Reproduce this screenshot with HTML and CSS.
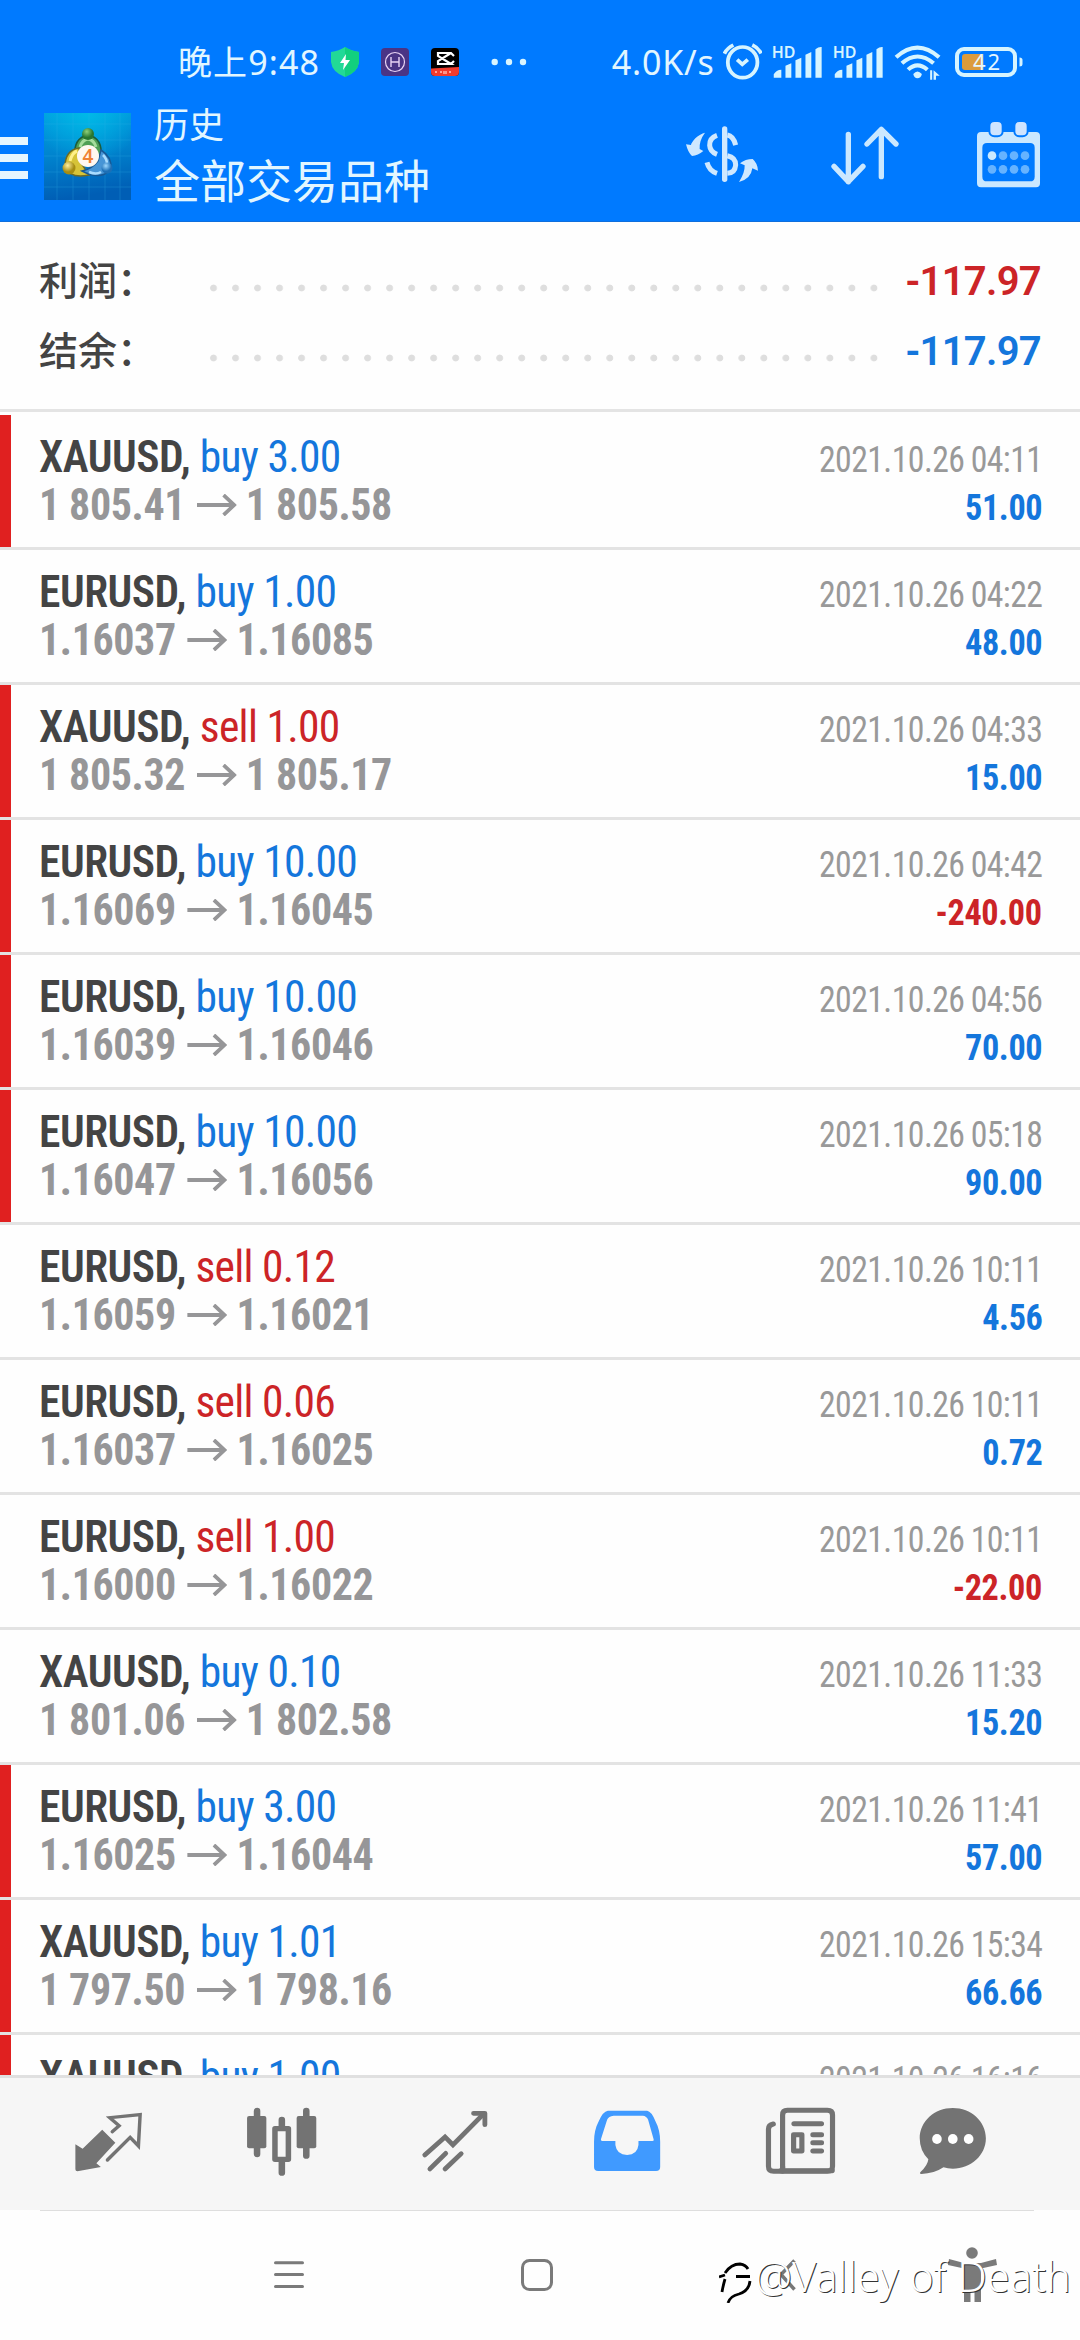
FILE: index.html
```html
<!DOCTYPE html>
<html lang="zh-CN">
<head>
<meta charset="utf-8">
<title>历史</title>
<link rel="stylesheet" href="styles.css">
</head>
<body>
<svg class="defs" width="0" height="0">
  <symbol id="arrow" viewBox="0 0 41 22"><path d="M0 11H39M27.500 1L38.500 11L27.500 21" fill="none" stroke="#969698" stroke-width="3.800"/></symbol>
  <symbol id="signal" viewBox="668 130 150 110" preserveAspectRatio="none">
    <path d="M676 234V224Q683 210 698 210V234ZM710 234V198L727 191V234ZM739 234V182L756 174V234ZM768 234V165L785 157V234ZM797 234V149Q806 141 815 142V234Z" fill="#d6f4ff"/>
    <text x="670" y="174" font-size="47" textLength="69" lengthAdjust="spacingAndGlyphs" font-weight="600" fill="#d6f4ff">HD</text>
  </symbol>
</svg>
<header class="top">
  <div class="status">
    <div class="status-left">
      <span class="clock">晚上9:48</span>
      <svg class="shield" viewBox="0 0 28 30"><path d="M14 0Q20 4 28 5V15Q27 25 14 30Q1 25 0 15V5Q8 4 14 0Z" fill="#22d997"/><path d="M14 0Q20 4 28 5V15Q27 25 14 30Z" fill="#12cf7e"/><path d="M15 7L9 16H13L12 23L19 13H14.500Z" fill="#fff"/></svg>
      <svg class="app" viewBox="0 0 28 28"><rect width="28" height="28" rx="4" fill="#4a3485"/><circle cx="14" cy="14" r="9.500" fill="none" stroke="#e9d4f5" stroke-width="1.200"/><path d="M10 9V19M18 9V19M10 14H18" stroke="#e9d4f5" stroke-width="1.400"/></svg>
      <svg class="app" viewBox="0 0 28 28"><rect width="28" height="28" rx="4" fill="#000"/><path d="M0 20.500L28 19V24Q28 28 24 28H4Q0 28 0 24Z" fill="#f23b2d"/><path d="M23 8L20 5H7V8L20 16H7V13L20 5M20 16L23 13" fill="none" stroke="#fff" stroke-width="2.200"/><path d="M4 24H6M9 24H11M13 23V26M15 23V26M18 24H20" stroke="#ffc6bd" stroke-width="1.300"/></svg>
      <svg class="more" viewBox="0 0 36 8"><g fill="#d9f5ff"><circle cx="3.700" cy="4" r="3.200"/><circle cx="18" cy="4" r="3.200"/><circle cx="32" cy="4" r="3.200"/></g></svg>
    </div>
    <div class="status-right">
      <span class="speed">4.0K/s</span>
      <svg class="alarm" viewBox="525 130 115 110" preserveAspectRatio="none"><g fill="none" stroke="#d6f4ff" stroke-width="11"><ellipse cx="582" cy="188" rx="43" ry="46"/><path d="M529 162Q536 146 555 136M610 136Q627 144 636 161M566 180L581 194L597 180"/></g></svg>
      <svg class="signal"><use href="#signal"/></svg>
      <svg class="signal"><use href="#signal"/></svg>
      <svg class="wifi" viewBox="1026 130 136 112" preserveAspectRatio="none"><g fill="none" stroke="#d6f4ff" stroke-width="12"><path d="M1032 173Q1094 115 1157 173M1049 191Q1094 150 1141 191M1067 210Q1094 184 1123 210"/></g><path d="M1082 223Q1094 208 1107 223Q1104 236 1094 236Q1085 236 1082 223ZM1118 223L1131 240V212H1137V240H1131M1141 240V212L1159 228H1148V240Z" fill="#d6f4ff"/></svg>
      <svg class="battery" viewBox="0 0 69 32"><rect x="2" y="3" width="58" height="26" rx="7" fill="none" stroke="#d6f4ff" stroke-width="4"/><path d="M64.500 11.500Q67.500 11.500 67.500 14V18Q67.500 20.500 64.500 20.500Z" fill="#d6f4ff"/><path d="M10 8H28V24H10Q7 24 7 21V11Q7 8 10 8Z" fill="#dc9b3c"/><text x="18" y="24" font-size="22" textLength="27" fill="#e4f7ff">42</text></svg>
    </div>
  </div>
  <div class="appbar">
    <div class="burger"><i></i><i></i><i></i></div>
    <svg class="logo" viewBox="0 0 87 87">
      <defs>
        <linearGradient id="sky" x2=".15" y2="1"><stop stop-color="#009fdf"/><stop offset=".5" stop-color="#0083ce"/><stop offset="1" stop-color="#005eb5"/></linearGradient>
        <radialGradient id="shine" cx=".5" cy="0" r=".6"><stop stop-color="#00c0ea" stop-opacity=".8"/><stop offset="1" stop-color="#00c8ec" stop-opacity="0"/></radialGradient>
        <radialGradient id="green" cx=".4" cy=".3"><stop stop-color="#8fd07a"/><stop offset="1" stop-color="#28762f"/></radialGradient>
        <radialGradient id="gold" cx=".4" cy=".3"><stop stop-color="#fff0a0"/><stop offset="1" stop-color="#a58c12"/></radialGradient>
        <radialGradient id="blue" cx=".4" cy=".3"><stop stop-color="#9ed8ff"/><stop offset="1" stop-color="#1c6fb6"/></radialGradient>
      </defs>
      <rect width="87" height="87" fill="url(#sky)"/><rect width="87" height="87" fill="url(#shine)"/>
      <path d="M13 0V87M29 0V87M45 0V87M61 0V87M76 0V87M0 11H87M0 27H87M0 43H87M0 59H87M0 74H87" stroke="#38b5ea" stroke-width=".7" opacity=".35"/>
      <path d="M31 44Q29 25 44 22Q59 25 57 44L44 38Z" fill="#4f9f55" stroke="#1d5d3c" stroke-width="1.500"/>
      <path d="M36 34Q38 27 44 26Q50 27 52 34" fill="none" stroke="#a5dc9c" stroke-width="3"/>
      <path d="M35 35Q21 37 21 54Q26 66 45 62L37 50Z" fill="#d6c338" stroke="#6c6a25" stroke-width="1.500"/>
      <path d="M26 48Q28 40 33 38" fill="none" stroke="#fff08a" stroke-width="3"/>
      <path d="M57 37Q68 44 67 56Q57 68 38 58Q48 56 54 48Z" fill="#4795d6" stroke="#185995" stroke-width="1.500"/>
      <path d="M59 42Q63 46 63 51M45 59Q52 62 57 59" fill="none" stroke="#a9dcff" stroke-width="2.500"/>
      <circle cx="44" cy="21" r="6" fill="url(#green)"/><circle cx="25" cy="55" r="6.500" fill="url(#gold)"/><circle cx="63" cy="55" r="5.500" fill="url(#blue)"/>
      <circle cx="44" cy="43" r="11" fill="#fff8f0"/>
      <text x="44" y="50" text-anchor="middle" font-size="19" font-weight="600" fill="#f08235">4</text>
    </svg>
    <div class="titles"><h1>历史</h1><h2>全部交易品种</h2></div>
    <div class="actions">
      <svg class="act-money" viewBox="42 75 228 185"><g fill="none" stroke="#cfe8ff" stroke-width="15"><path d="M164 87V238" stroke-width="16" stroke-linecap="round"/><path d="M141 106Q118 114 119 136Q120 155 141 163M111 187Q117 212 141 220M172 105Q190 108 197 135M172 167Q197 172 197 195Q195 219 172 220"/></g><path d="M105 98Q91 101 76 115Q63 130 63 135L48 133Q54 158 66 168Q84 166 100 153L89 147Q87 122 105 98ZM207 246Q243 237 247 205L264 212Q263 190 248 177Q226 177 210 190L224 196Q225 218 207 246Z" fill="#cfe8ff"/></svg>
      <svg class="act-sort" viewBox="480 75 210 185"><path d="M535 103V245M492 199L535 245L579 199M634 230V88M591 132L634 88L678 132" fill="none" stroke="#cbe8ff" stroke-width="16" stroke-linecap="round" stroke-linejoin="round"/></svg>
      <svg class="act-cal" viewBox="915 60 200 207"><path fill-rule="evenodd" d="M933 96H1098Q1110 96 1110 108V250Q1110 262 1098 262H933Q921 262 921 250V108Q921 96 933 96ZM951 129Q937 129 937 143V230Q937 244 951 244H1080Q1094 244 1094 230V143Q1094 129 1080 129Z" fill="#cbe8ff"/><g fill="#cfe4ff" stroke="#007aff" stroke-width="6"><rect x="958" y="63" width="40" height="46" rx="15"/><rect x="1033" y="63" width="40" height="46" rx="15"/></g><circle cx="966" cy="167" r="13" fill="#cbeaff"/><g fill="#66b3ff"><circle cx="999" cy="167" r="13"/><circle cx="1032" cy="167" r="13"/><circle cx="1065" cy="167" r="13"/><circle cx="966" cy="208" r="13"/><circle cx="999" cy="208" r="13"/><circle cx="1032" cy="208" r="13"/><circle cx="1065" cy="208" r="13"/></g></svg>
    </div>
  </div>
</header>
<section class="summary">
  <div class="sum"><span class="label">利润：</span><span class="dots"></span><b class="neg">-117.97</b></div>
  <div class="sum"><span class="label">结余：</span><span class="dots"></span><b class="pos">-117.97</b></div>
</section>
<main class="deals">
  <article class="deal marked"><div class="line"><span class="sym">XAUUSD, <em class="pos">buy 3.00</em></span><time>2021.10.26 04:11</time></div><div class="line"><span class="price">1 805.41<svg><use href="#arrow"/></svg>1 805.58</span><b class="pos">51.00</b></div></article>
  <article class="deal"><div class="line"><span class="sym">EURUSD, <em class="pos">buy 1.00</em></span><time>2021.10.26 04:22</time></div><div class="line"><span class="price">1.16037<svg><use href="#arrow"/></svg>1.16085</span><b class="pos">48.00</b></div></article>
  <article class="deal marked"><div class="line"><span class="sym">XAUUSD, <em class="neg">sell 1.00</em></span><time>2021.10.26 04:33</time></div><div class="line"><span class="price">1 805.32<svg><use href="#arrow"/></svg>1 805.17</span><b class="pos">15.00</b></div></article>
  <article class="deal marked"><div class="line"><span class="sym">EURUSD, <em class="pos">buy 10.00</em></span><time>2021.10.26 04:42</time></div><div class="line"><span class="price">1.16069<svg><use href="#arrow"/></svg>1.16045</span><b class="neg">-240.00</b></div></article>
  <article class="deal marked"><div class="line"><span class="sym">EURUSD, <em class="pos">buy 10.00</em></span><time>2021.10.26 04:56</time></div><div class="line"><span class="price">1.16039<svg><use href="#arrow"/></svg>1.16046</span><b class="pos">70.00</b></div></article>
  <article class="deal marked"><div class="line"><span class="sym">EURUSD, <em class="pos">buy 10.00</em></span><time>2021.10.26 05:18</time></div><div class="line"><span class="price">1.16047<svg><use href="#arrow"/></svg>1.16056</span><b class="pos">90.00</b></div></article>
  <article class="deal"><div class="line"><span class="sym">EURUSD, <em class="neg">sell 0.12</em></span><time>2021.10.26 10:11</time></div><div class="line"><span class="price">1.16059<svg><use href="#arrow"/></svg>1.16021</span><b class="pos">4.56</b></div></article>
  <article class="deal"><div class="line"><span class="sym">EURUSD, <em class="neg">sell 0.06</em></span><time>2021.10.26 10:11</time></div><div class="line"><span class="price">1.16037<svg><use href="#arrow"/></svg>1.16025</span><b class="pos">0.72</b></div></article>
  <article class="deal"><div class="line"><span class="sym">EURUSD, <em class="neg">sell 1.00</em></span><time>2021.10.26 10:11</time></div><div class="line"><span class="price">1.16000<svg><use href="#arrow"/></svg>1.16022</span><b class="neg">-22.00</b></div></article>
  <article class="deal"><div class="line"><span class="sym">XAUUSD, <em class="pos">buy 0.10</em></span><time>2021.10.26 11:33</time></div><div class="line"><span class="price">1 801.06<svg><use href="#arrow"/></svg>1 802.58</span><b class="pos">15.20</b></div></article>
  <article class="deal marked"><div class="line"><span class="sym">EURUSD, <em class="pos">buy 3.00</em></span><time>2021.10.26 11:41</time></div><div class="line"><span class="price">1.16025<svg><use href="#arrow"/></svg>1.16044</span><b class="pos">57.00</b></div></article>
  <article class="deal marked"><div class="line"><span class="sym">XAUUSD, <em class="pos">buy 1.01</em></span><time>2021.10.26 15:34</time></div><div class="line"><span class="price">1 797.50<svg><use href="#arrow"/></svg>1 798.16</span><b class="pos">66.66</b></div></article>
  <article class="deal marked"><div class="line"><span class="sym">XAUUSD, <em class="pos">buy 1.00</em></span><time>2021.10.26 16:16</time></div></article>
</main>
<nav class="tabs">
  <svg width="68.900" viewBox="215 255 200 220" preserveAspectRatio="none"><path d="M297 329L335 368L280 430L293 441L225 454Q219 454 219 448V373L240 386Z" fill="#737373"/><path d="M326 335L346 317L319 293L407 284L402 378L378 352L312 420" fill="none" stroke="#737373" stroke-width="10" stroke-linecap="round"/></svg>
  <svg width="73" viewBox="710 255 212 220" preserveAspectRatio="none"><g stroke="#737373" stroke-width="19" stroke-linecap="round"><path d="M745 273V402M888 273V407M817 300V325M817 425V458"/></g><rect x="716" y="288" width="56" height="97" rx="6" fill="#737373"/><rect x="860" y="288" width="57" height="97" rx="6" fill="#737373"/><rect x="797" y="326" width="39" height="92" fill="#f6f6f6" stroke="#737373" stroke-width="16" stroke-linejoin="round"/></svg>
  <svg width="68" viewBox="1220 255 198 220" preserveAspectRatio="none"><g fill="none" stroke="#737373" stroke-width="14" stroke-linecap="round"><path d="M1231 405L1290 351L1313 375L1403 281"/><path d="M1373 280H1406V314" stroke-linejoin="round"/><path d="M1292 400L1246 447M1337 401L1290 447"/></g></svg>
  <svg width="68.900" viewBox="155 255 200 220" preserveAspectRatio="none"><path fill-rule="evenodd" d="M198 272H312Q325 274 336 303Q350 330 350 365V441Q350 453 338 453H170Q158 453 158 441V365Q158 330 172 303Q184 274 198 272ZM215 287Q200 289 196 299L178 358Q177 363 182 363H220V375Q224 405 254 405Q284 404 287 375V363H328Q333 363 331 358L315 299Q310 288 300 287Z" fill="#409aff"/></svg>
  <svg width="73" viewBox="652 255 212 220" preserveAspectRatio="none"><g fill="none" stroke="#737373" stroke-linecap="round"><path d="M706 444V285Q706 271 720 271H836Q851 271 851 285V439Q851 454 836 454H680Q665 454 665 439V327Q665 315 679 312" stroke-width="15"/><path d="M706 440V454M700 452H850" stroke-width="15"/><path d="M739 311H819M794 344H819M794 368H819M794 393H819" stroke-width="15"/><rect x="738" y="344" width="24" height="49" stroke-width="15" stroke-linejoin="round"/></g></svg>
  <svg width="69.600" viewBox="1098 255 202 220" preserveAspectRatio="none"><path d="M1199 264C1252 264 1295 304 1295 355C1295 406 1252 446 1199 446Q1184 446 1172 442Q1145 461 1108 462Q1100 461 1106 455Q1126 437 1128 418Q1103 392 1103 355C1103 304 1146 264 1199 264Z" fill="#737373"/><g fill="#fff"><ellipse cx="1153" cy="357" rx="14" ry="15"/><ellipse cx="1199" cy="357" rx="14" ry="15"/><ellipse cx="1245" cy="357" rx="14" ry="15"/></g></svg>
</nav>
<footer class="sysnav">
  <svg class="nav-menu" viewBox="0 0 30 32"><path d="M1.500 4.700H28.500M1.500 16.500H28.500M1.500 28.500H28.500" stroke="#7a7a7a" stroke-width="3" stroke-linecap="round"/></svg>
  <svg class="nav-home" viewBox="0 0 32 32"><rect x="1.500" y="1.500" width="29" height="29" rx="7" fill="none" stroke="#7a7a7a" stroke-width="3"/></svg>
  <svg class="nav-back" viewBox="0 0 19 32"><path d="M16.500 1.500L3 15.500L16.500 30.500" fill="none" stroke="#777" stroke-width="3.500"/></svg>
  <svg class="nav-person" viewBox="0 0 49 56"><circle cx="24" cy="6" r="5.800" fill="#7a7a7a"/><path d="M1 12L16 16H33L48 12L49 18L33 21.500V55H26.500V43H22.500V55H16V21.500L0 18Z" fill="#7a7a7a"/></svg>
  <div class="watermark">
    <svg viewBox="0 0 34 42"><path d="M0 16L6 14M17 15.500H31M3 31Q4 25 6 18M6 12Q12 3 21 3Q27 4 29 8M31 20Q30 30 20 33Q11 35 9 42" fill="none" stroke="#000" stroke-width="2.800"/></svg>
    <span>@Valley of Death</span>
  </div>
</footer>
</body>
</html>
```
FILE: styles.css
```css
* { box-sizing: border-box; margin: 0; }
body { width: 1080px; height: 2340px; overflow: hidden; background: #fefefe; display: flex; flex-direction: column; font-family: "Noto Sans", "Noto Sans CJK SC", sans-serif; }
svg { display: block; flex: none; }
.defs { position: absolute; }
.pos { color: #1476dc; }
.neg { color: #cc2427; }

.top { height: 222px; background: #007aff; border-bottom: 1px solid #0f6fdd; color: #e2f6ff; flex: none; }
.status { height: 100px; padding: 0 56px 0 178px; display: flex; justify-content: space-between; }
.status-left, .status-right { display: flex; align-items: flex-start; }
.clock, .speed { font-size: 34px; line-height: 46px; margin-top: 39px; white-space: nowrap; }
.clock { width: 153px; letter-spacing: 1.100px; }
.shield { width: 28px; height: 30px; margin-top: 47px; }
.app { width: 28px; height: 28px; margin: 48px 0 0 22px; }
.more { width: 36px; height: 8px; margin: 58px 0 0 32px; }
.speed { width: 111px; letter-spacing: .800px; }
.alarm { width: 39.600px; height: 36.700px; margin-top: 43px; }
.signal { width: 51.700px; height: 36.700px; margin: 43px 0 0 8.700px; }
.wifi { width: 46.800px; height: 37.300px; margin: 43px 0 0 11px; }
.battery { width: 69px; height: 32px; margin: 46px 0 0 14px; }

.appbar { display: flex; height: 121px; }
.burger { width: 27.500px; margin: 37px 16.500px 0 0; display: flex; flex-direction: column; gap: 9.500px; }
.burger i { height: 7.500px; background: #e6f6ff; }
.logo { width: 87px; height: 87px; margin-top: 13px; }
.titles { width: 553px; padding-left: 23px; margin-top: -2px; font-family: "Noto Sans CJK SC", sans-serif; }
.titles h1 { font-size: 35px; line-height: 50px; font-weight: 400; }
.titles h2 { font-size: 46px; line-height: 60px; font-weight: 400; }
.actions { display: flex; align-items: flex-start; }
.act-money { width: 76px; height: 61.700px; margin-top: 25px; }
.act-sort { width: 70px; height: 61.700px; margin: 25px 0 0 70px; }
.act-cal { width: 66.700px; height: 69px; margin: 20px 0 0 75px; }

.summary { height: 190px; padding: 24px 39px 0 39px; border-bottom: 3px solid #e4e4e4; flex: none; }
.sum { display: flex; height: 70px; align-items: center; }
.label { width: 170px; margin-top: -6px; font: 500 39px/70px "Noto Sans CJK SC", sans-serif; color: #444; }
.dots { width: 682px; height: 8px; margin-top: 14px; background: radial-gradient(circle at 4.500px 4px, #dedede 3px, transparent 3.800px) 0 0 / 22.020px 8px; }
.sum b { margin: 2px 0 0 auto; font: 600 40px/70px Roboto, sans-serif; letter-spacing: -.7px; }

.deals { height: 1663px; padding-top: 3px; overflow: hidden; flex: none; }
.deal { height: 135px; padding: 19px 38px 0 39px; border-bottom: 3px solid #e3e3e3; }
.marked { background: linear-gradient(#e02020, #e02020) 0 0 / 11px 100% no-repeat padding-box; }
.line { display: flex; justify-content: space-between; align-items: baseline; height: 48px; line-height: 48px; white-space: nowrap; font-family: "Roboto Condensed", sans-serif; }
.sym { font-size: 43.500px; font-weight: 600; color: #444; letter-spacing: -.5px; }
.sym em { font-style: normal; font-weight: 400; letter-spacing: -.7px; }
.price { font-size: 43.500px; font-weight: 700; color: #969698; display: flex; letter-spacing: -.4px; transform: scaleX(.965); transform-origin: left; }
.price svg { width: 42.500px; height: 22px; margin: 12px 9px 0 11.500px; }
.line time { font-size: 36px; color: #999; letter-spacing: -.6px; word-spacing: -1px; transform: scaleX(.937); transform-origin: right; }
.line b { font-size: 36px; font-weight: 700; letter-spacing: -.4px; transform: scaleX(.95); transform-origin: right; }

.tabs { height: 135px; flex: none; padding: 27px 0 0 22px; border-top: 3px solid #e0e0e0; background: #f6f6f6; display: grid; grid-template-columns: repeat(5, 173px) 132px; justify-items: center; }
.tabs svg { height: 73.300px; }

.sysnav { position: relative; flex: 1; display: flex; align-items: flex-start; padding-left: 274px; }
.sysnav::before { content: ""; position: absolute; top: 0; left: 40px; right: 46px; height: 1px; background: #dedede; }
.nav-menu { width: 30px; height: 32px; margin-top: 48px; }
.nav-home { width: 32px; height: 32px; margin: 49px 0 0 217px; }
.nav-back { width: 19px; height: 32px; margin: 49px 0 0 225px; }
.nav-person { width: 49px; height: 56px; margin: 37px 0 0 151px; }
.watermark { position: absolute; left: 719px; top: 51px; display: flex; }
.watermark svg { width: 34px; height: 42px; }
.watermark span { font: 300 41.500px/50px "Noto Sans", sans-serif; margin: -10px 0 0 2px; color: #fff; text-shadow: 1px 1px .5px #333; white-space: nowrap; }
```
